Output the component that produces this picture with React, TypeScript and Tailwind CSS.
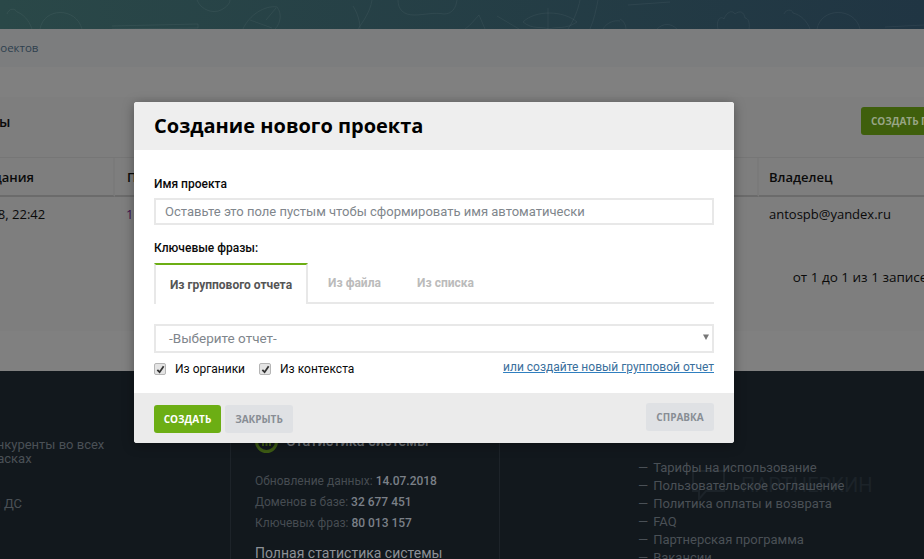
const footerLinks = [
  'Тарифы на использование',
  'Пользовательское соглашение',
  'Политика оплаты и возврата',
  'FAQ',
  'Партнерская программа',
  'Вакансии',
];

const stats = [
  ['Обновление данных:', '14.07.2018'],
  ['Доменов в базе:', '32 677 451'],
  ['Ключевых фраз:', '80 013 157'],
];

// Faint doodles in the top band
function HeaderPattern() {
  return (
    <svg viewBox="0 0 924 29" className="h-[29px] w-full" fill="none" stroke="#ffffff" strokeOpacity="0.05" aria-hidden>
      <path d="M7 14c2-6 8-6 10-2 6 2 12 8 15 17M40 29c4-22 36-22 42 0" />
      <path d="M112 26l86-2v4l-86 1M197 0c4 10 16 14 24 10 6-3 9-7 9-10" />
      <path d="M243 29c6-14 22-24 34-22 5 6 4 16-2 22M250 20l22 8M276 8l-10 12" />
      <path d="M353 6c5 8 7 16 7 23M372 0c-2 12-8 20-14 29M398 0c0 10 6 15 16 15s20-3 30-1c8 0 12-6 13-14" />
      <path d="M465 29c6-4 10-10 14-14l6 14M497 16l22 13" />
      <path d="M523 22c12-12 40-12 54 0-12 8-20 4-28 7-8-3-16 1-26-7zM548 8v21M580 0c-2 10-6 20-12 29M598 0c-2 10-4 20-8 29M603 29c4-7 12-9 17-8" />
      <path d="M628 5l42-3M620 19c4 2 6 6 6 10M657 29c6-6 14-6 20 0" />
      <path d="M718 29c-2-8 2-14 6-10 2-6 8-10 11-5 5-4 9-2 10 4 3 0 5 4 4 11" />
      <path d="M784 14c2-5 8-5 9-1 8 2 14 8 17 16M817 29c4-22 38-22 43 0M885 27l39-2" />
    </svg>
  );
}

function Checkbox() {
  return (
    <span className="flex h-[12px] w-[12px] items-center justify-center rounded-[2px] border border-[#b5b5b5] bg-[#e4e4e4]">
      <svg viewBox="0 0 10 10" className="h-[9px] w-[9px]" fill="none" stroke="#333" strokeWidth="2" aria-hidden>
        <path d="M1.5 5.5 4 8l4.5-6.5" />
      </svg>
    </span>
  );
}

export default function App() {
  return (
    <div className="relative h-[559px] w-[924px] overflow-hidden font-['Roboto',sans-serif] text-[13px] text-[#0a0a0a]">
      {/* Page behind the dialog, cut off on both sides. Colours are already dimmed by the backdrop */}
      <div className="ml-[-116px] flex w-[1156px] flex-col">
        <div className="ml-[116px] w-[924px] bg-gradient-to-r from-[#2a4848] to-[#203543]">
          <HeaderPattern />
        </div>
        <div className="flex h-[38px] items-center bg-[#7c7d7e] pl-[59px] font-['Open_Sans',sans-serif] text-[11.5px] text-[#2e404e]">
          Список проектов
        </div>
        <div className="h-[30px] bg-[#808080]" />

        <div className="h-[234px] bg-[#7e7e7e]">
          <div className="mb-[12px] flex h-[48px] items-center justify-between pl-[31px]">
            <span className="font-['Open_Sans',sans-serif] text-[14px] font-semibold">Мои проекты</span>
            <button className="mr-[76px] flex h-[28px] w-[103px] items-center rounded-[3px] bg-[#3f5f0c] pl-[10px] font-['Open_Sans',sans-serif] text-[10px] font-bold whitespace-nowrap text-[#98a585]">
              СОЗДАТЬ ПРОЕКТ
            </button>
          </div>

          <div className="flex h-[40px] border-t border-t-[#767676] font-['Open_Sans',sans-serif] text-[13px] font-semibold">
            <div className="flex w-[231px] items-center border-r-2 border-b-2 border-[#7a7a7a] border-b-[#6b6b6b] pt-[2px] pl-[54px]">Дата создания</div>
            <div className="flex flex-1 items-center border-r-2 border-b-2 border-[#7a7a7a] border-b-[#6b6b6b] pt-[2px] pl-[12px]">Проект</div>
            <div className="flex w-[281px] items-center border-b-2 border-b-[#6b6b6b] pt-[2px] pl-[10px]">Владелец</div>
          </div>
          <div className="flex h-[36px] items-center font-['Open_Sans',sans-serif] text-[13px]">
            <div className="w-[231px] pl-[55px]">15.07.2018, 22:42</div>
            <div className="flex-1 pl-[11px] text-[#3d0d4d]">1</div>
            <div className="w-[281px] pl-[10px]">antospb@yandex.ru</div>
          </div>
          <div className="mt-[35px] pr-[104px] text-right font-['Open_Sans',sans-serif] text-[13.5px] leading-[18px]">от 1 до 1 из 1 записей</div>
        </div>

        <div className="h-[40px] bg-[#808080]" />

        <footer className="flex h-[188px] bg-[#12181d] text-[#4a5056]">
          <div className="w-[346px] pl-[62px] text-[13px] leading-[14px]">
            <p className="mt-[67px]">Ваши конкуренты во всех<br />и всех масках</p>
            <p className="mt-[31px]">Анализы ДС</p>
          </div>
          <div className="w-[269px] border-l border-[#1d2329] pl-[24px]">
            <div className="mt-[59px] flex items-center gap-[8px]">
              <span className="flex h-[23px] w-[23px] items-center justify-center rounded-full border-[3px] border-[#3e5c14]">
                <svg viewBox="0 0 9 8" className="h-[8px] w-[9px] fill-[#3e5c14]" aria-hidden>
                  <path d="M0 3h2v5H0zM3.5 1h2v7h-2zM7 3h2v5H7z" />
                </svg>
              </span>
              <span className="text-[14.5px] font-medium text-[#6f7378]">Статистика системы</span>
            </div>
            <div className="mt-[19px] flex flex-col gap-[3px] leading-[18px]">
              {stats.map(([label, value]) => (
                <div key={label} className="text-[12px] text-[#464c52]">
                  {label} <span className="font-medium text-[#7b8088]">{value}</span>
                </div>
              ))}
            </div>
            <div className="mt-[11px] text-[14px] text-[#8c9096]">Полная статистика системы</div>
          </div>
          <div className="relative z-10 border-l border-[#1d2329] pt-[88px] pl-[138px]">
            <ul className="text-[13px] leading-[18px]">
              {footerLinks.map((link) => (
                <li key={link} className="flex gap-[5px] whitespace-nowrap">
                  <span>—</span>
                  {link}
                </li>
              ))}
            </ul>
          </div>
        </footer>
      </div>

      {/* Partnerkin watermark under the footer links */}
      <div className="absolute top-[470px] left-[692px] flex items-center gap-[16px] text-[#1c2329]">
        <svg viewBox="0 0 33 30" className="h-[30px] w-[33px]" fill="none" stroke="#1c2329" strokeWidth="2" aria-hidden>
          <path d="M1 1h31v20H14l-7 8v-8H1z" />
        </svg>
        <span className="text-[20px] leading-[24px]">ПАРТНЕРКИН</span>
      </div>

      {/* Dialog */}
      <div className="absolute top-[102px] left-[134px] z-20 w-[600px] overflow-hidden rounded-[3px] bg-white shadow-[0_2px_12px_rgba(0,0,0,0.35)]">
        <div className="flex h-[48px] items-center bg-[#eeeeee] pl-[20px] font-['Open_Sans',sans-serif] text-[20px] font-bold text-black">
          Создание нового проекта
        </div>

        <div className="px-[20px] pt-[27px]">
          <label className="block text-[12px] leading-[15px] font-medium">Имя проекта</label>
          <div className="mt-[6px] flex h-[27px] items-center border-2 border-[#e8e8e8] pl-[9px] text-[13px] text-[#80868c]">
            Оставьте это поле пустым чтобы сформировать имя автоматически
          </div>

          <label className="mt-[16px] block text-[12px] leading-[15px] font-medium">Ключевые фразы:</label>

          <div className="mt-[7px] flex h-[41px] border-b-2 border-[#e8e8e8] text-[12px] font-bold">
            <div className="mb-[-2px] flex w-[154px] items-center justify-center border-x-2 border-t-2 border-x-[#e8e8e8] border-t-[#6cae14] bg-white text-[#555]">
              Из группового отчета
            </div>
            <div className="flex w-[93px] items-center justify-center text-[#bbb]">Из файла</div>
            <div className="flex w-[89px] items-center justify-center whitespace-nowrap text-[#bbb]">Из списка</div>
          </div>

          <div className="mt-[20px] flex h-[29px] items-center justify-between border-2 border-[#e8e8e8] pr-[2px] pl-[13px] text-[13.5px] text-[#80868c]">
            <span>-Выберите отчет-</span>
            <svg viewBox="0 0 8 8" className="mb-[3px] h-[8px] w-[8px] fill-[#777]" aria-hidden>
              <path d="M1 1.5h6L4 7z" />
            </svg>
          </div>

          <div className="mt-[7px] flex h-[33px] items-start justify-between">
            <div className="flex gap-[14px] text-[12px]">
              <label className="flex items-center gap-[9px]">
                <Checkbox />
                Из органики
              </label>
              <label className="flex items-center gap-[9px]">
                <Checkbox />
                Из контекста
              </label>
            </div>
            <a className="mt-[-2px] text-[12px] text-[#3a6f9c] underline decoration-[#2f7fc0]">или создайте новый групповой отчет</a>
          </div>
        </div>

        <div className="flex h-[50px] items-start justify-between bg-[#ebebeb] px-[20px]">
          <div className="mt-[12px] flex gap-[4px] font-['Open_Sans',sans-serif] text-[10px] font-bold">
            <button className="h-[28px] w-[67px] rounded-[3px] bg-[#6cae14] text-white">СОЗДАТЬ</button>
            <button className="h-[28px] w-[68px] rounded-[3px] bg-[#dfe1e4] text-[#888d94]">ЗАКРЫТЬ</button>
          </div>
          <button className="mt-[10px] h-[28px] w-[68px] rounded-[3px] bg-[#dfe1e4] font-['Open_Sans',sans-serif] text-[10px] font-bold text-[#888d94]">
            СПРАВКА
          </button>
        </div>
      </div>
    </div>
  );
}
